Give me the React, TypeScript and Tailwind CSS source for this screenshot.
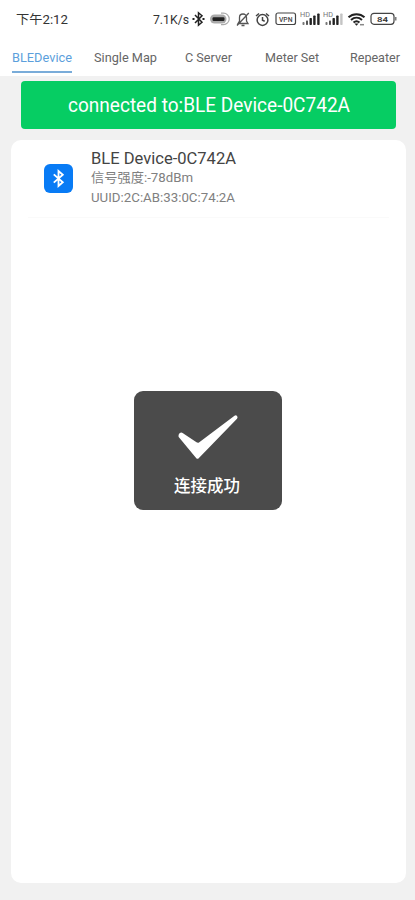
const tabs = [
  { label: 'BLEDevice', width: 60 },
  { label: 'Single Map', width: 63 },
  { label: 'C Server', width: 47 },
  { label: 'Meter Set', width: 54 },
  { label: 'Repeater', width: 50 },
];

function FitText({ children, width, height, size, y, weight = 400 }: {
  children: string;
  width: number;
  height: number;
  size: number;
  y: number;
  weight?: number;
}) {
  return (
    <svg width={width} height={height} className="block shrink-0 overflow-visible" fill="currentColor">
      <text x="0" y={y} fontSize={size} fontWeight={weight} textLength={width} lengthAdjust="spacingAndGlyphs">
        {children}
      </text>
    </svg>
  );
}

function Bluetooth({ className = '' }: { className?: string }) {
  return (
    <svg viewBox="0 0 14 16" className={className} fill="none" stroke="currentColor" strokeWidth="1.7">
      <path d="M2.6 4.2 11 11.5 7 15V1l4 3.5-8.4 7.3" />
    </svg>
  );
}

function Signal({ weak = false }: { weak?: boolean }) {
  return (
    <svg width="22" height="14" viewBox="0 0 22 14" className="shrink-0" fill="#222">
      <text x="0" y="5" fontSize="6.5" fill="#777" textLength="10" lengthAdjust="spacingAndGlyphs">HD</text>
      <rect x="2.5" y="10" width="2" height="3" rx=".7" fill="#777" />
      <rect x="6" y="8.5" width="2" height="4.5" rx=".7" fill="#555" />
      <rect x="9.5" y="6" width="2.4" height="7" rx=".7" />
      <rect x="13.2" y="3.5" width="2.4" height="9.5" rx=".7" />
      <rect x="17.2" y="1.5" width="2.4" height="11.5" rx=".7" fill={weak ? '#c4c4c4' : '#222'} />
    </svg>
  );
}

function StatusBar() {
  return (
    <div className="flex h-[38px] items-center pl-4 text-[#333]">
      <FitText width={52} height={16} size={12.5} y={13}>下午2:12</FitText>
      <div className="ml-[85px] flex items-center">
        <FitText width={36} height={16} size={13} y={13}>7.1K/s</FitText>
        <svg width="15" height="16" viewBox="0 0 15 16" className="ml-0.5" fill="none" stroke="#222" strokeWidth="1.5">
          <path d="m4 4 7 7.2-3.5 3V1.8l3.5 3L4 12" />
          <path d="M1.5 8h2M11.5 8h2" strokeWidth="1.8" />
        </svg>
        <svg width="21" height="14" viewBox="0 0 21 14" className="ml-[3px]" fill="none">
          <path d="M12 1.2h2.5a5.7 5.7 0 0 1 0 11.4H12" stroke="#aaa" strokeWidth="1.2" />
          <rect x="1" y="2.5" width="16.5" height="9" rx="4.5" fill="#aaa" />
          <rect x="3.5" y="5.2" width="12" height="3.8" rx="1.2" fill="#222" />
        </svg>
        <svg width="14" height="15" viewBox="0 0 14 15" className="ml-1.5" fill="none" stroke="#555" strokeWidth="1.3">
          <path d="M2 11.5h10L10.5 9V5.5C10.5 3.2 9 2 7 2S3.5 3.2 3.5 5.5V9zM5.5 13.5h3M1 13.5 12.8 1" />
        </svg>
        <svg width="15" height="15" viewBox="0 0 15 15" className="ml-[5px]" fill="none" stroke="#444" strokeWidth="1.5">
          <circle cx="7.5" cy="8" r="5.4" />
          <path d="M7.5 5v3.3l2.2 1M1 4l3-2.5M14 4l-3-2.5" />
        </svg>
        <svg width="22" height="14" viewBox="0 0 22 14" className="ml-[5px]">
          <rect x="1" y="1" width="19.5" height="11.5" rx="2" fill="none" stroke="#444" strokeWidth="1.2" />
          <text x="4" y="9.5" fontSize="7.5" fontWeight="500" fill="#444" textLength="13.5" lengthAdjust="spacingAndGlyphs">VPN</text>
        </svg>
        <div className="ml-[3px] flex gap-px">
          <Signal />
          <Signal weak />
        </div>
        <svg width="19" height="15" viewBox="0 0 19 15" className="ml-0.5" fill="none" stroke="#222" strokeWidth="2">
          <path d="M1.5 5.3c4.5-4.2 11.5-4.2 16 0M4 8c3.3-2.9 7.7-2.9 11 0M6.5 10.5c1.8-1.5 4.2-1.5 6 0" />
          <path d="m7.5 11.5 2 2.2 2-2.2z" fill="#222" stroke="none" />
          <path d="M13 12.7h4" stroke="#888" strokeWidth="1.5" />
        </svg>
        <svg width="27" height="14" viewBox="0 0 27 14" className="ml-1">
          <rect x="1" y="1.3" width="23" height="11" rx="3" fill="none" stroke="#444" strokeWidth="1.2" />
          <path d="M25.8 5v3.5" stroke="#666" strokeWidth="1.3" />
          <text x="7" y="9.7" fontSize="8" fontWeight="600" fill="#333" textLength="11" lengthAdjust="spacingAndGlyphs">84</text>
        </svg>
      </div>
    </div>
  );
}

function Toast() {
  return (
    <div className="absolute left-[134px] top-[391px] flex h-[119px] w-[148px] flex-col items-center rounded-[9px] bg-[#4b4b4b] pr-0.5 text-white">
      <svg width="60" height="45" viewBox="0 0 60 45" className="ml-px mt-6" fill="white">
        <path d="M.7 22Q0 19.5 1.8 18q1.6-.9 3.2.2L18.5 27.3Q20 28.2 21.3 27.2L56.5.8q1.5-.9 2.5.1 1 1.2 0 2.8L20.7 43.3q-1.2 1-2.4 0Z" />
      </svg>
      <div className="mt-4">
        <FitText width={66} height={22} size={16.5} y={16} weight={500}>连接成功</FitText>
      </div>
    </div>
  );
}

export default function App() {
  return (
    <div className="relative flex h-[900px] w-[415px] flex-col overflow-hidden bg-[#f1f1f1] font-[Roboto,'Noto_Sans_CJK_SC',sans-serif]">
      <header className="h-[76px] shrink-0 bg-white">
        <StatusBar />
        <nav className="grid h-9 w-[417px] grid-cols-5">
          {tabs.map((tab, i) => (
            <div key={tab.label} className="flex justify-center">
              <div className={i === 0 ? 'h-[35px] border-b-2 border-[#79acd9] pt-2.5 text-[#5c9fdc]' : 'pt-2.5 text-[#666]'}>
                <FitText width={tab.width} height={18} size={13} y={13.5}>{tab.label}</FitText>
              </div>
            </div>
          ))}
        </nav>
      </header>

      <div className="ml-[21px] mt-[5px] flex h-12 w-[375px] shrink-0 items-center justify-center rounded bg-[#06cd63] text-white">
        <FitText width={282} height={24} size={19.5} y={18.5}>connected to:BLE Device-0C742A</FitText>
      </div>

      <main className="ml-[11px] mt-[11px] h-[743px] w-[395px] rounded-[10px] bg-white">
        <div className="mx-[17px] flex h-[78px] border-b border-[#fafafa]">
          <div className="ml-4 mt-6 flex h-[29px] w-[29px] items-center justify-center rounded-md bg-[#087bf5] text-white">
            <Bluetooth className="h-[19px] w-[15px]" />
          </div>
          <div className="ml-[18px] pt-[9px]">
            <div className="text-[#444]">
              <FitText width={145} height={20} size={16.5} y={15}>BLE Device-0C742A</FitText>
            </div>
            <div className="text-[#808080]">
              <FitText width={102} height={19} size={13} y={13}>信号强度:-78dBm</FitText>
              <FitText width={144} height={19} size={13} y={13.5}>UUID:2C:AB:33:0C:74:2A</FitText>
            </div>
          </div>
        </div>
      </main>

      <Toast />
    </div>
  );
}
